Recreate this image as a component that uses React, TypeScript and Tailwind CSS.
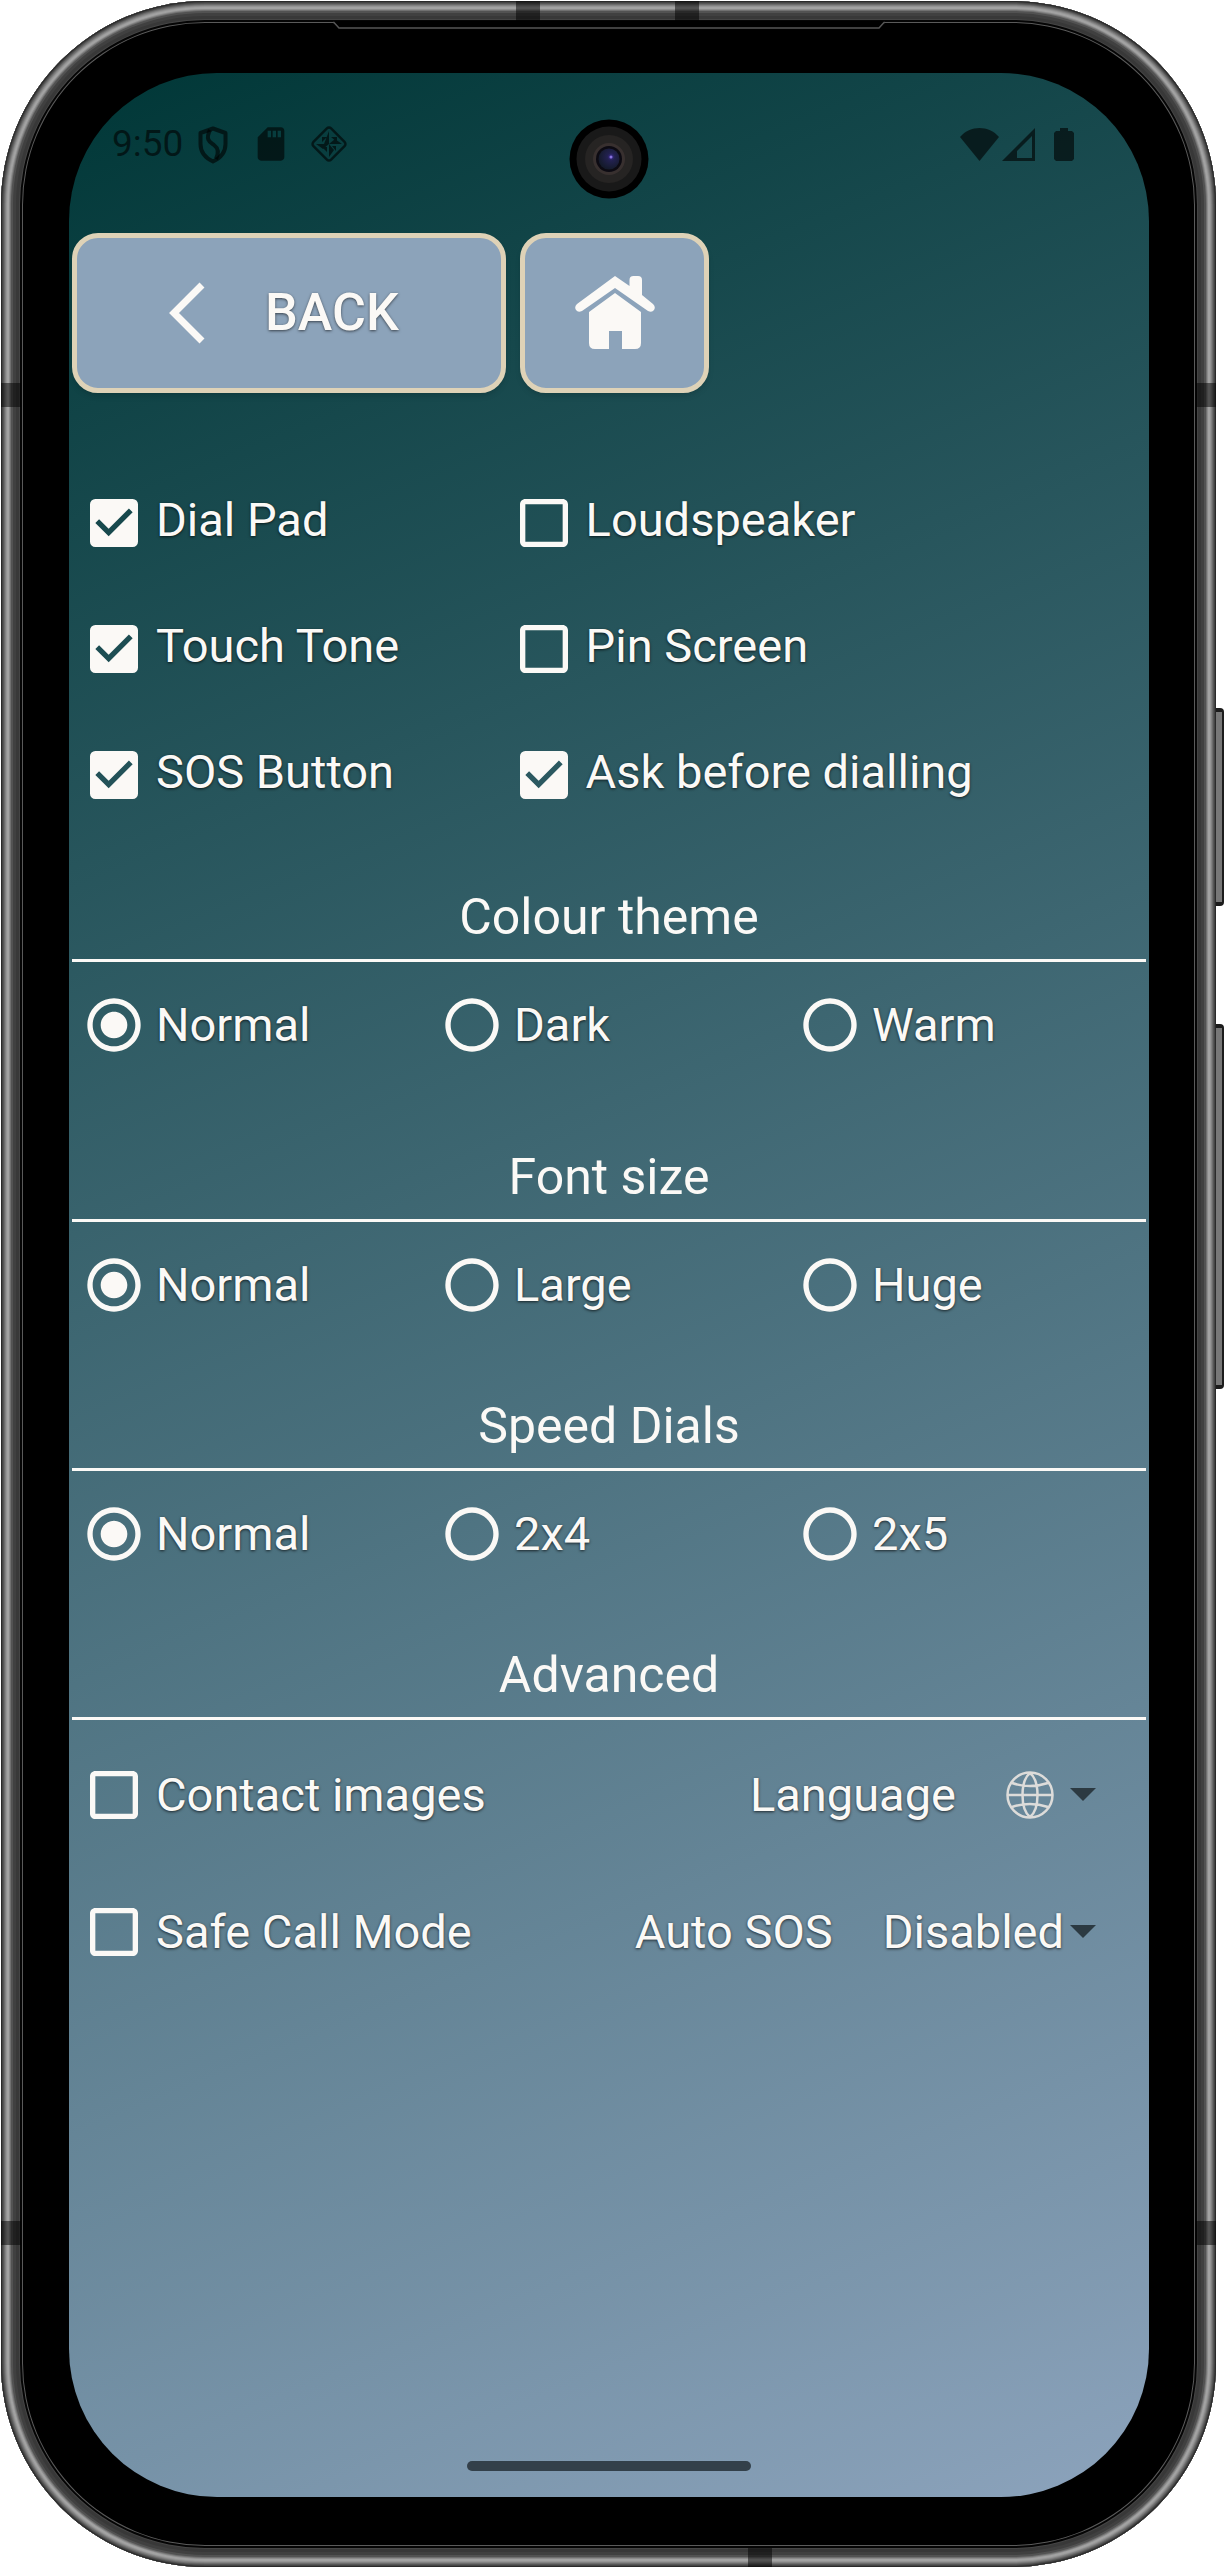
import { useId, useState } from "react";
import type { ReactNode } from "react";
import {
  MdCheckBox,
  MdCheckBoxOutlineBlank,
  MdRadioButtonChecked,
  MdRadioButtonUnchecked,
  MdSdCard,
} from "react-icons/md";

const LABEL = "text-[47px] leading-[56px] whitespace-nowrap [text-shadow:0_1px_3px_rgba(0,0,0,0.7)]";

const checks = [
  { label: "Dial Pad", on: true },
  { label: "Loudspeaker", on: false },
  { label: "Touch Tone", on: true },
  { label: "Pin Screen", on: false },
  { label: "SOS Button", on: true },
  { label: "Ask before dialling", on: true },
];

const Check = ({ label, on = false }: { label: string; on?: boolean }) => {
  const [checked, setChecked] = useState(on);
  const Icon = checked ? MdCheckBox : MdCheckBoxOutlineBlank;

  return (
    <label className="flex items-center gap-[10px] pl-[10px]">
      <span className="relative size-16 shrink-0">
        <input
          type="checkbox"
          checked={checked}
          onChange={(event) => setChecked(event.target.checked)}
          className="block size-16 appearance-none"
        />
        <Icon className="pointer-events-none absolute inset-0 size-16" />
      </span>
      <span className={LABEL}>{label}</span>
    </label>
  );
};

const RadioRow = ({ name, options }: { name: string; options: string[] }) => {
  const [selected, setSelected] = useState(options[0]);

  return (
    <div className="grid h-[126px] grid-cols-3">
      {options.map((option) => {
        const Icon = option === selected ? MdRadioButtonChecked : MdRadioButtonUnchecked;
        return (
          <label key={option} className="flex items-center gap-[10px] pl-[10px]">
            <span className="relative size-16 shrink-0">
              <input
                type="radio"
                name={name}
                checked={option === selected}
                onChange={() => setSelected(option)}
                className="block size-16 appearance-none"
              />
              <Icon className="pointer-events-none absolute inset-0 size-16" />
            </span>
            <span className={LABEL}>{option}</span>
          </label>
        );
      })}
    </div>
  );
};

const Section = ({ title, children }: { title: string; children: ReactNode }) => (
  <section>
    <h2 className="border-b-3 border-[#fbf9f6] pb-3 text-center text-[50px] leading-[60px]">{title}</h2>
    {children}
  </section>
);

const Caret = () => (
  <svg viewBox="0 0 26 13" className="h-[13px] w-[26px] text-[#2c3a42]" fill="currentColor" aria-hidden="true">
    <path d="M0 0h26L13 13z" />
  </svg>
);

const StatusBar = () => (
  <div className="mb-[18px] flex h-[142px] items-center justify-between pr-[72px] pl-10 text-black/60">
    <div className="flex items-center gap-[18px]">
      <span className="-mr-2 text-[37px]">9:50</span>
      <svg viewBox="0 0 40 40" className="size-10" fill="none" stroke="currentColor" strokeWidth="4">
        <path d="M20 4.500 7.500 9v11c0 8 5 14 12.500 17.500C27.500 34 32.500 28 32.500 20V9z" strokeLinejoin="round" />
        <path d="M17 6c-5 10 0 12 4 15s5 8 2 14" />
      </svg>
      <MdSdCard className="size-10" />
      <svg viewBox="0 0 40 40" className="size-10">
        <rect x="7.500" y="7.500" width="25" height="25" rx="3" transform="rotate(45 20 20)" fill="none" stroke="currentColor" strokeWidth="2.500" />
        <path
          d="M20 7v13h-5zM20 20h13l-7-5zM20 20v13l5-7zM20 20H7l7 5zM13 13h5l-5 5zM22 13l6 5v-5zM27 27v-5l-4 0zM12 22l6 6v-5z"
          fill="currentColor"
        />
      </svg>
    </div>
    <div className="flex items-center gap-[3px]">
      <svg viewBox="0 0 39 33" className="h-[33px] w-[39px]" fill="currentColor">
        <path d="M0 9C10-3 29-3 39 9L19.500 33z" />
      </svg>
      <svg viewBox="0 0 33 33" className="mr-4 h-[33px] w-[33px]" fill="currentColor" fillRule="evenodd">
        <path d="M33 0v33H0zM30 8 15 23v7h15z" />
      </svg>
      <svg viewBox="0 0 20 33" className="h-[33px] w-5" fill="currentColor">
        <path d="M6 0h8v3h4l2 2v26l-2 2H2l-2-2V5l2-2h4z" />
      </svg>
    </div>
  </div>
);

const Camera = () => (
  <svg viewBox="0 0 80 80" className="absolute top-[46px] left-1/2 size-20 -translate-x-1/2" aria-hidden="true">
    <defs>
      <radialGradient id="lens" cx="0.6" cy="0.4" r="0.6">
        <stop offset="0" stopColor="#3d2a94" />
        <stop offset="0.3" stopColor="#22214f" />
        <stop offset="1" stopColor="#141a2a" />
      </radialGradient>
    </defs>
    <circle cx="40" cy="40" r="39.500" fill="#000" />
    <circle cx="40" cy="40" r="32.500" fill="#191919" />
    <circle cx="40" cy="40" r="24" fill="#262423" />
    <circle cx="40" cy="40" r="16" fill="#38302f" />
    <circle cx="40" cy="40" r="13" fill="#0c0a12" />
    <circle cx="40" cy="40" r="10.500" fill="url(#lens)" />
    <circle cx="42" cy="38" r="1.500" fill="#8a74e0" />
  </svg>
);

// Antenna bands, speaker slit and side keys sitting on the metal rim
const FrameDetails = () => (
  <div aria-hidden="true">
    <span className="absolute top-0 left-[515px] h-5 w-6 bg-black/50" />
    <span className="absolute top-0 left-[674px] h-5 w-6 bg-black/50" />
    <span className="absolute bottom-0 left-[747px] h-[19px] w-6 bg-black/50" />
    <span className="absolute top-[382px] left-0 h-6 w-5 bg-black/50" />
    <span className="absolute top-[382px] right-0 h-6 w-5 bg-black/50" />
    <span className="absolute bottom-[322px] left-0 h-6 w-5 bg-black/50" />
    <span className="absolute right-0 bottom-[322px] h-6 w-5 bg-black/50" />
    <span className="absolute top-[707px] left-full h-[198px] w-2 rounded-r-sm border-y-4 border-r-2 border-[#1c1c1c] bg-[#777]" />
    <span className="absolute top-[1023px] left-full h-[365px] w-2 rounded-r-sm border-y-4 border-r-2 border-[#1c1c1c] bg-[#777]" />
    <svg viewBox="0 0 552 9" className="absolute top-5 left-[332px] h-[9px] w-[552px]">
      <path d="M0 0h552v9H0z" fill="#000" />
      <path d="M0 1.500h1l5 5.500h540l5-5.500h1" fill="none" stroke="#555" strokeWidth="1.500" />
    </svg>
  </div>
);

export default function App() {
  const languageId = useId();
  const sosId = useId();

  return (
    <div className="flex min-h-screen bg-white pt-px pr-[13px] pl-px font-['Roboto',sans-serif] text-[#fbf9f6]">
      <div className="relative flex flex-1 rounded-[204px] bg-black pt-[72px] pr-[67px] pb-[70px] pl-[68px] shadow-[inset_0_0_0_1px_#2a2a2a,inset_0_0_0_2px_#444,inset_0_0_0_3px_#565656,inset_0_0_0_4px_#6c6c6c,inset_0_0_0_5px_#828282,inset_0_0_0_6px_#959595,inset_0_0_0_8px_#a2a2a2,inset_0_0_0_9px_#8c8c8c,inset_0_0_0_10px_#707070,inset_0_0_0_12px_#525252,inset_0_0_0_15px_#404040,inset_0_0_0_18px_#383838,inset_0_0_0_19px_#444,inset_0_0_0_21px_#050505,inset_0_0_0_22px_#5a5a5a]">
        <FrameDetails />

        <main className="relative flex flex-1 flex-col rounded-[148px] bg-linear-[158deg,#003737,#8ca3bc] px-[3px] pb-[26px]">
          <StatusBar />
          <Camera />

          <nav className="flex h-40 gap-[14px]">
            <button className="flex w-[434px] items-center gap-[59px] rounded-[26px] border-5 border-[#ded2b7] bg-[#8ca3ba] pl-[92px] shadow-md">
              <svg viewBox="0 0 37 62" className="h-[62px] w-[37px]" fill="none" stroke="currentColor" strokeWidth="7">
                <path d="M33 3 5 31l28 28" />
              </svg>
              <span className="text-[52px] font-medium [text-shadow:0_1px_3px_rgba(0,0,0,0.6)]">BACK</span>
            </button>
            <button
              aria-label="Home"
              className="flex w-[189px] items-center justify-center rounded-[26px] border-5 border-[#ded2b7] bg-[#8ca3ba] shadow-md"
            >
              <svg viewBox="0 0 80 74" className="h-[74px] w-20" fill="currentColor">
                <path d="M40 0 54.500 10V4q0-4 4-4H63q4 0 4 4v15l11 9q3 3 1 6t-6 1L40 12 7 35q-4 2-6-1t1-6z" />
                <path d="M40 17 66 36v31q0 6-6 6H47V55H34v18H20q-6 0-6-6V36z" />
              </svg>
            </button>
          </nav>

          <div className="mt-[67px] mb-[49px] grid auto-rows-[126px] grid-cols-[2fr_3fr] [&_label>span:last-child]:pb-[6px]">
            {checks.map((item) => (
              <Check key={item.label} {...item} />
            ))}
          </div>

          <div className="flex flex-col gap-12">
            <div className="mb-[11px]">
              <Section title="Colour theme">
                <RadioRow name="theme" options={["Normal", "Dark", "Warm"]} />
              </Section>
            </div>
            <Section title="Font size">
              <RadioRow name="font" options={["Normal", "Large", "Huge"]} />
            </Section>
            <Section title="Speed Dials">
              <RadioRow name="dials" options={["Normal", "2x4", "2x5"]} />
            </Section>
            <Section title="Advanced">
              <div className="grid auto-rows-[137px] pt-[6px] pr-[50px]">
                <div className="flex items-center justify-between">
                  <Check label="Contact images" />
                  <div className="flex items-center gap-[50px]">
                    <span id={languageId} className={LABEL}>
                      Language
                    </span>
                    <button aria-labelledby={languageId} aria-haspopup="listbox" className="flex items-center gap-4">
                      <svg viewBox="0 0 48 48" className="size-12" fill="none" stroke="#dddcda" strokeWidth="2.500">
                        <circle cx="24" cy="24" r="22.500" />
                        <path d="M2 24h44M6 12q18 6 36 0M6 36q18-6 36 0M24 2c-10 8-10 36 0 44M24 2c10 8 10 36 0 44" />
                      </svg>
                      <Caret />
                    </button>
                  </div>
                </div>
                <div className="flex items-center justify-between">
                  <Check label="Safe Call Mode" />
                  <div className="flex items-center gap-[50px]">
                    <label htmlFor={sosId} className={LABEL}>
                      Auto SOS
                    </label>
                    <div className="flex items-center gap-[6px]">
                      <select id={sosId} className={`field-sizing-content appearance-none ${LABEL}`}>
                        <option>Disabled</option>
                      </select>
                      <Caret />
                    </div>
                  </div>
                </div>
              </div>
            </Section>
          </div>

          <div className="mx-auto mt-auto h-[10px] w-[284px] rounded-full bg-[#33404a]" />
        </main>
      </div>
    </div>
  );
}
